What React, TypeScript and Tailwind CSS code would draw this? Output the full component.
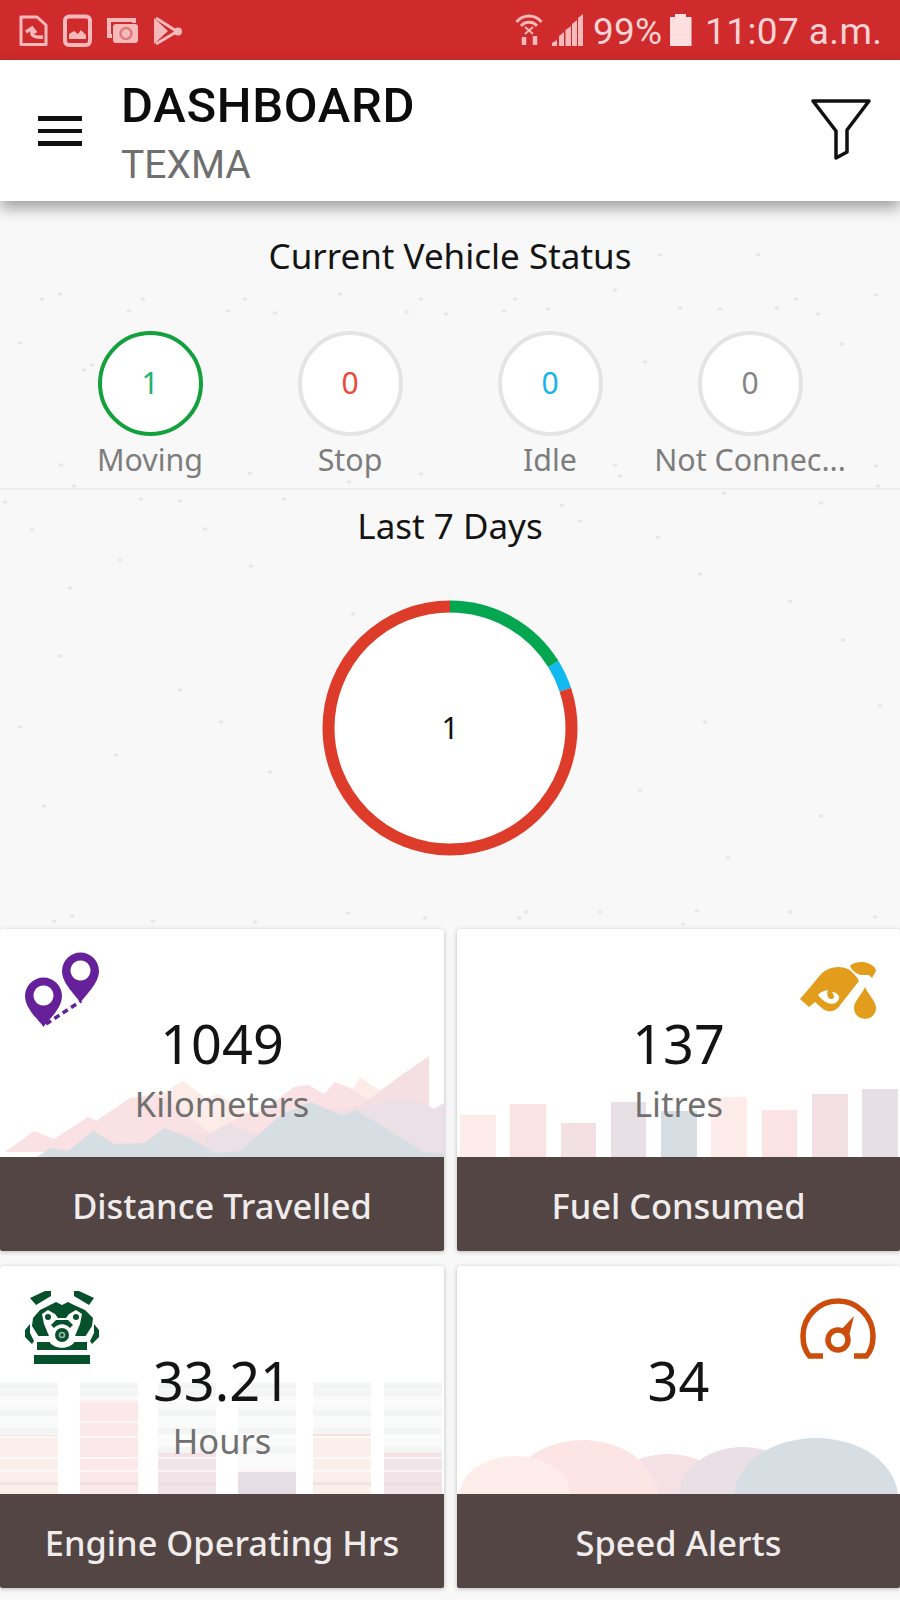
import type { ReactNode } from 'react';

interface Status {
  label: string;
  count: number;
  ring: string;
  text: string;
}

const STATUSES: Status[] = [
  { label: 'Moving', count: 1, ring: 'border-[#12a13c]', text: 'text-[#1fb26b]' },
  { label: 'Stop', count: 0, ring: 'border-[#e4e4e4]', text: 'text-[#ea4a38]' },
  { label: 'Idle', count: 0, ring: 'border-[#e4e4e4]', text: 'text-[#16b4ec]' },
  { label: 'Not Connec...', count: 0, ring: 'border-[#e4e4e4]', text: 'text-[#858585]' },
];

const SPECKS = [
  [60, 294], [42, 299], [143, 299], [129, 311], [228, 311], [245, 299], [275, 313], [340, 294],
  [421, 299], [446, 314], [407, 312], [20, 343], [92, 365], [84, 370], [61, 465], [74, 486],
  [250, 473], [349, 482], [421, 474], [5, 502], [141, 499], [180, 501], [284, 499], [32, 530],
  [515, 299], [504, 311], [548, 309], [615, 290], [680, 308], [720, 309], [777, 308], [818, 314],
  [876, 295], [796, 299], [660, 255], [758, 255], [645, 362], [842, 344], [615, 465], [620, 476],
  [876, 466], [878, 486], [724, 493], [821, 503], [562, 505], [205, 529], [658, 537], [580, 521],
  [120, 560], [70, 588], [251, 566], [700, 574], [790, 601], [353, 614], [843, 640], [60, 656],
  [180, 690], [221, 722], [20, 727], [705, 722], [880, 706], [116, 755], [270, 772], [640, 790],
  [44, 806], [821, 816], [728, 858], [72, 916], [54, 921], [153, 921], [255, 922], [348, 913],
  [425, 918], [526, 912], [519, 918], [600, 912], [697, 911], [683, 924], [790, 912], [875, 917],
];

function StatusBar() {
  return (
    <div className="flex h-[60px] items-center justify-between bg-[#cf2a2c] pl-[19px] pr-[18px] text-[#fbd3d4]">
      <svg width="166" height="34" viewBox="0 0 166 34" fill="none" stroke="#f8b9bb" strokeWidth="2.6">
        <path d="M2 4 H18 L27 12 V31.500 H2 Z" strokeLinejoin="round" strokeWidth="3" />
        <path d="M7 19 L13 15 L17 20 M13 15 V21 C14 24 18 24.500 24 24" strokeWidth="3.5" />
        <rect x="46" y="3.500" width="25" height="28.500" rx="4" strokeWidth="4" />
        <path d="M50 26 V21 L55 18 L59 21 L62 17 L67 22 V26 Z" fill="#f8b9bb" stroke="none" />
        <path d="M93 23 H90 V7 H115 V10" strokeWidth="4" />
        <rect x="94" y="11" width="25" height="19" rx="3" fill="#f8b9bb" stroke="none" />
        <circle cx="107" cy="20.500" r="5.500" strokeWidth="2.500" stroke="#e07b7d" />
        <path d="M135 5 V31 L149 18 Z" fill="#f8b9bb" stroke="none" />
        <path d="M137 5 L158 18.500 L137 31" strokeWidth="3" />
        <circle cx="159" cy="18.500" r="4" fill="#f8b9bb" stroke="none" />
      </svg>
      <div className="flex items-center font-[Roboto,sans-serif] text-[37px] leading-none">
        <svg width="28" height="34" viewBox="0 0 28 34" fill="none" stroke="#f8b9bb" strokeWidth="3">
          <path d="M1.500 9 C8 1 20 1 26.500 9 M6 13 C10 8 18 8 22 13" />
          <path d="M10 14 L18 21 M18 14 L10 21" strokeWidth="2" />
          <path d="M9 24 V32 M20 32 V23" strokeWidth="4.500" />
        </svg>
        <svg className="ml-[8px]" width="34" height="34" viewBox="0 0 34 34" fill="#f8b9bb">
          <path d="M1 33 V30 L6 27 V33 Z M8 33 V23 L13 19 V33 Z M14.500 33 V17 L20 13 V33 Z M21 33 V11 L26 7 V33 Z M27 33 V5 L32 1 V33 Z" />
        </svg>
        <span className="ml-[8px] w-[70px] pt-[2px] tracking-[0.2px]">99%</span>
        <svg className="ml-[7px]" width="22" height="34" viewBox="0 0 22 34" fill="#ffdfe0">
          <path d="M0 4 H5 V1 H16 V4 H21.500 V33 H0 Z" />
        </svg>
        <span className="ml-[13px] w-[177px] whitespace-nowrap pt-[2px] tracking-[0.4px]">11:07 a.m.</span>
      </div>
    </div>
  );
}

function Header() {
  return (
    <header className="relative z-10 flex h-[141px] items-start bg-white pl-[38px] pr-[29px] font-[Roboto,sans-serif] shadow-[0_7px_14px_0px_rgba(0,0,0,0.36)]">
      <button type="button" aria-label="Menu" className="mt-[56px] flex w-[44px] flex-col gap-[8px]">
        <span className="h-[4.500px] bg-[#111]" />
        <span className="h-[4.500px] bg-[#111]" />
        <span className="h-[4.500px] bg-[#111]" />
      </button>
      <div className="ml-[39px] flex-1 pt-[17px]">
        <h1 className="text-[49px] leading-[58px] font-medium tracking-[0.7px] text-[#0c0c0c]">DASHBOARD</h1>
        <p className="text-[39px] leading-[60px] text-[#6f6f6f]">TEXMA</p>
      </div>
      <button type="button" aria-label="Filter" className="mt-[38px]">
        <svg width="60" height="64" viewBox="0 0 60 64" fill="none" stroke="#111" strokeWidth="3.500">
          <path d="M2 3 H58 L36 32 V54 L25 60 V33 Z" strokeLinejoin="round" />
        </svg>
      </button>
    </header>
  );
}

function StatusCircle({ status }: { status: Status }) {
  return (
    <div className="flex w-[200px] flex-col items-center">
      <div
        className={`flex size-[105px] items-center justify-center rounded-full border-4 bg-white pb-[2px] text-[30px] ${status.ring} ${status.text}`}
      >
        {status.count}
      </div>
      <span className="mt-[4px] whitespace-nowrap text-[30.4px] leading-[40px] text-[#7d7d7d]">
        {status.label}
      </span>
    </div>
  );
}

function Donut() {
  const segments = [
    { share: 16.2, offset: 0, color: '#04a650' },
    { share: 3.7, offset: 16.2, color: '#12b9f0' },
    { share: 80.1, offset: 19.9, color: '#de3c2b' },
  ];
  return (
    <div className="relative mx-auto mt-[51px] size-[256px]">
      <svg width="256" height="256" viewBox="0 0 256 256">
        <circle cx="128" cy="128" r="118" fill="white" />
        <g transform="rotate(-90 128 128)">
          {segments.map((s) => (
            <circle
              key={s.color}
              cx="128"
              cy="128"
              r="121.500"
              fill="none"
              stroke={s.color}
              strokeWidth="12"
              pathLength={100}
              strokeDasharray={`${s.share} ${100 - s.share}`}
              strokeDashoffset={-s.offset}
            />
          ))}
        </g>
      </svg>
      <span className="absolute inset-0 flex items-center justify-center pb-[2px] text-[30px] text-[#111]">1</span>
    </div>
  );
}

function PinsIcon() {
  return (
    <svg width="76" height="76" viewBox="0 0 76 76" fill="#65209a">
      <path
        fillRule="evenodd"
        d="M19.500 75 C15 68 1 57 1 44 A18.500 18.500 0 0 1 38 44 C38 57 24 68 19.500 75 Z M19.500 33.500 a10 10 0 1 0 0.010 0 Z"
      />
      <path
        fillRule="evenodd"
        d="M56.500 51 C52 43 38 32 38 19 A18.500 18.500 0 0 1 75 19 C75 32 61 43 56.500 51 Z M56.500 8.500 a10 10 0 1 0 0.010 0 Z"
      />
      <path d="M22 72 L57 49" stroke="#65209a" strokeWidth="3.500" strokeDasharray="6 4" />
    </svg>
  );
}

function OilIcon() {
  return (
    <svg width="76" height="58" viewBox="0 0 76 58" fill="#e39d1c">
      <path d="M0 38 C8 29 15 20 22 12 C29 6 39 4 48 8 C53 11 57 16 59 20 L41 43 C36 51 29 52 23 48 L15 41 L9 46 Z" />
      <path d="M50 5 C55 0 68 -1 75 7 L76 10 L72 17 L69 14 H61 C57 13 52 10 50 5 Z" />
      <path d="M65 26 C69 35 76 40 76 47 A11 11 0 0 1 54 47 C54 40 61 35 65 26 Z" />
      <path d="M18 34 C20 31 24 30 28 29 C26 33 28 39 32 38 C36 37 33 33 32 31 C36 31 40 34 39 38 C36 45 27 45 18 34 Z" fill="white" />
    </svg>
  );
}

function EngineIcon() {
  return (
    <svg width="76" height="74" viewBox="0 0 76 74" fill="#07502c">
      <path d="M6 8 L21 1 H27 V6 L12 15 Z M70 8 L55 1 H50 V6 L65 15 Z" />
      <path d="M26 15 L32 12 L38 15 L44 12 L50 15 L61 20 L69 28 L68 36 L61 47 H15 L8 36 L9 28 L16 20 Z" />
      <path d="M6 34 L1 40 V47 L8 54 L10 51 L6 43 Z M70 34 L75 40 V47 L68 54 L66 51 L70 43 Z" />
      <path d="M13 52 H63 V60 H13 Z M10 65 H66 V74 H10 Z" />
      <path d="M18 24 L24 20 L31 24 L34 28 H42 L45 24 L52 20 L58 24 L56 34 L51 46 H64 V51 H51 C47 60 29 60 25 51 H12 V46 H25 L20 34 Z" fill="white" />
      <circle cx="24" cy="27" r="3" />
      <circle cx="52" cy="27" r="3" />
      <path d="M27 35 L32 30 H44 L49 35 L46 38 C41 33 35 33 30 38 Z" />
      <circle cx="38" cy="45" r="7" />
      <circle cx="38" cy="45" r="2.500" fill="none" stroke="#9bb8a8" strokeWidth="1.500" />
    </svg>
  );
}

function GaugeIcon() {
  return (
    <svg width="76" height="64" viewBox="0 0 76 64" fill="none" stroke="#cc4d0b" strokeWidth="5.500">
      <path d="M23 59 H9.500 C5 54 3 48 3 39 A35 35 0 0 1 73 39 C73 48 71 54 66.500 59 H54" />
      <circle cx="38" cy="43" r="10" />
      <path d="M40 34 L54 19 L49 39 Z" fill="#cc4d0b" stroke="none" />
    </svg>
  );
}

function MountainChart() {
  return (
    <svg className="block" width="444" height="101" viewBox="0 0 444 101">
      <path d="M150 101 V45 L183 25 L206 42 L218 38 L250 58 L345 45 L360 21 L388 40 V101 Z" fill="#fdece8" />
      <path d="M5 96 L34 75 L54 83 L88 61 L96 65 L130 42 L160 38 L210 77 L245 58 L262 55 L294 31 L308 29 L324 38 L335 26 L350 32 L378 50 L400 70 V96 Z" fill="#fae1e4" />
      <path d="M165 77 L195 75 L207 80 L228 69 L256 79 L290 58 L360 50 L400 20 L429 0 V50 L434 53 L444 47 V101 H180 Z" fill="#f3dfe4" />
      <path d="M200 101 L207 80 L228 67 L256 79 L290 58 L355 55 L395 43 L420 47 L434 53 L444 47 V101 Z" fill="#ebe0e5" />
      <path d="M37 101 L50 92 L68 95 L93 75 L115 88 L145 87 L164 72 L190 82 L215 97 L240 95 L282 58 L311 46 L343 60 L356 54 L424 96 L444 97 V101 Z" fill="#d7dee3" />
    </svg>
  );
}

const FUEL_BARS = [
  { height: 42, color: '#fdece9' },
  { height: 53, color: '#fbe2e5' },
  { height: 34, color: '#f3e0e5' },
  { height: 55, color: '#e9e0e6' },
  { height: 46, color: '#d6dee4' },
  { height: 60, color: '#fdece9' },
  { height: 47, color: '#fbe2e5' },
  { height: 63, color: '#f3e0e5' },
  { height: 68, color: '#e8dfe5' },
];

function FuelChart() {
  return (
    <div className="flex h-full items-end gap-[14.700px] pl-[3px]">
      {FUEL_BARS.map((bar, i) => (
        <div key={i} className="w-[35.600px]" style={{ height: bar.height, backgroundColor: bar.color }} />
      ))}
    </div>
  );
}

const HOUR_BARS = [
  { x: 0, height: 59, color: '#fbefec' },
  { x: 80, height: 94, color: '#fae8ea' },
  { x: 158, height: 41, color: '#f1e4e9' },
  { x: 238, height: 24, color: '#e5dfe5' },
  { x: 313, height: 60, color: '#fbefec' },
  { x: 384, height: 41, color: '#f1e4e9' },
];

function HoursChart() {
  return (
    <svg className="block" width="444" height="112" viewBox="0 0 444 112">
      {HOUR_BARS.map((bar) => (
        <g key={bar.x}>
          <rect x={bar.x} y="0" width="58" height="112" fill="#fafafa" />
          {[1, 8, 28, 46, 65].map((y) => (
            <rect key={y} x={bar.x} y={y} width="58" height="6" fill="#f3f4f4" />
          ))}
          <rect x={bar.x} y={112 - bar.height} width="58" height={bar.height} fill={bar.color} />
          <rect x={bar.x} y={112 - bar.height} width="58" height="2" fill="#f8e0e2" />
          {[18, 39, 54, 75, 88].map((y) => (
            <rect key={y} x={bar.x} y={y} width="58" height="2" fill="white" opacity="0.600" />
          ))}
          <rect x={bar.x} y="100" width="58" height="3" fill="#ecd8df" opacity="0.600" />
        </g>
      ))}
    </svg>
  );
}

function SpeedChart() {
  return (
    <svg className="block" width="443" height="58" viewBox="0 0 443 58">
      <ellipse cx="211" cy="62" rx="60" ry="44" fill="#f5e0e5" />
      <ellipse cx="126" cy="64" rx="76" ry="60" fill="#fde4e5" />
      <ellipse cx="58" cy="60" rx="56" ry="40" fill="#feedea" />
      <ellipse cx="286" cy="60" rx="64" ry="49" fill="#e9dfe5" />
      <ellipse cx="359" cy="62" rx="82" ry="60" fill="#d7dee3" />
    </svg>
  );
}

interface CardProps {
  value: string;
  unit?: string;
  title: string;
  icon: ReactNode;
  iconClass: string;
  chart: ReactNode;
  chartClass: string;
}

function Card({ value, unit, title, icon, iconClass, chart, chartClass }: CardProps) {
  return (
    <section className="flex flex-col overflow-hidden rounded-t-[4px] rounded-b-[2px] shadow-[0_1px_4px_rgba(0,0,0,0.25)]">
      <div className="relative h-[228px] bg-white pt-[78px] text-center">
        <div className={`absolute inset-x-0 bottom-0 overflow-hidden ${chartClass}`}>{chart}</div>
        <div className={`absolute ${iconClass}`}>{icon}</div>
        <div className="relative text-[54px] leading-[72px] text-[#141414]">{value}</div>
        {unit && <div className="relative pt-[2px] text-[34.5px] leading-[46px] text-[#707070]">{unit}</div>}
      </div>
      <div className="flex h-[94px] items-center justify-center bg-[#524544] pt-[4px] text-[34.4px] font-medium text-[#efeceb]">
        {title}
      </div>
    </section>
  );
}

export default function App() {
  return (
    <div className="relative flex h-[1600px] w-[900px] flex-col overflow-hidden bg-[#f8f8f8] font-['Noto_Sans',sans-serif]">
      <StatusBar />
      <Header />
      <svg className="absolute inset-0" width="900" height="1600" fill="#e6e8e8">
        {SPECKS.map(([x, y]) => (
          <ellipse key={`${x}-${y}`} cx={x} cy={y} rx="2.500" ry="1.800" />
        ))}
      </svg>

      <div className="relative h-[289px] border-b-2 border-[#eeeeee] pt-[32px]">
        <h2 className="text-center text-[35px] leading-[46px] text-[#141414]">Current Vehicle Status</h2>
        <div className="mt-[52px] flex justify-center">
          {STATUSES.map((s) => (
            <StatusCircle key={s.label} status={s} />
          ))}
        </div>
      </div>

      <div className="relative h-[439px] pt-[13px]">
        <h2 className="text-center text-[35px] leading-[46px] text-[#141414]">Last 7 Days</h2>
        <Donut />
      </div>

      <div className="relative grid grid-cols-[444px_443px] gap-x-[13px] gap-y-[15px]">
        <Card
          value="1049"
          unit="Kilometers"
          title="Distance Travelled"
          icon={<PinsIcon />}
          iconClass="left-[24px] top-[23px]"
          chart={<MountainChart />}
          chartClass="h-[101px]"
        />
        <Card
          value="137"
          unit="Litres"
          title="Fuel Consumed"
          icon={<OilIcon />}
          iconClass="right-[24px] top-[32px]"
          chart={<FuelChart />}
          chartClass="h-[101px]"
        />
        <Card
          value="33.21"
          unit="Hours"
          title="Engine Operating Hrs"
          icon={<EngineIcon />}
          iconClass="left-[24px] top-[24px]"
          chart={<HoursChart />}
          chartClass="h-[112px]"
        />
        <Card
          value="34"
          title="Speed Alerts"
          icon={<GaugeIcon />}
          iconClass="right-[24px] top-[31px]"
          chart={<SpeedChart />}
          chartClass="h-[58px]"
        />
      </div>
    </div>
  );
}
